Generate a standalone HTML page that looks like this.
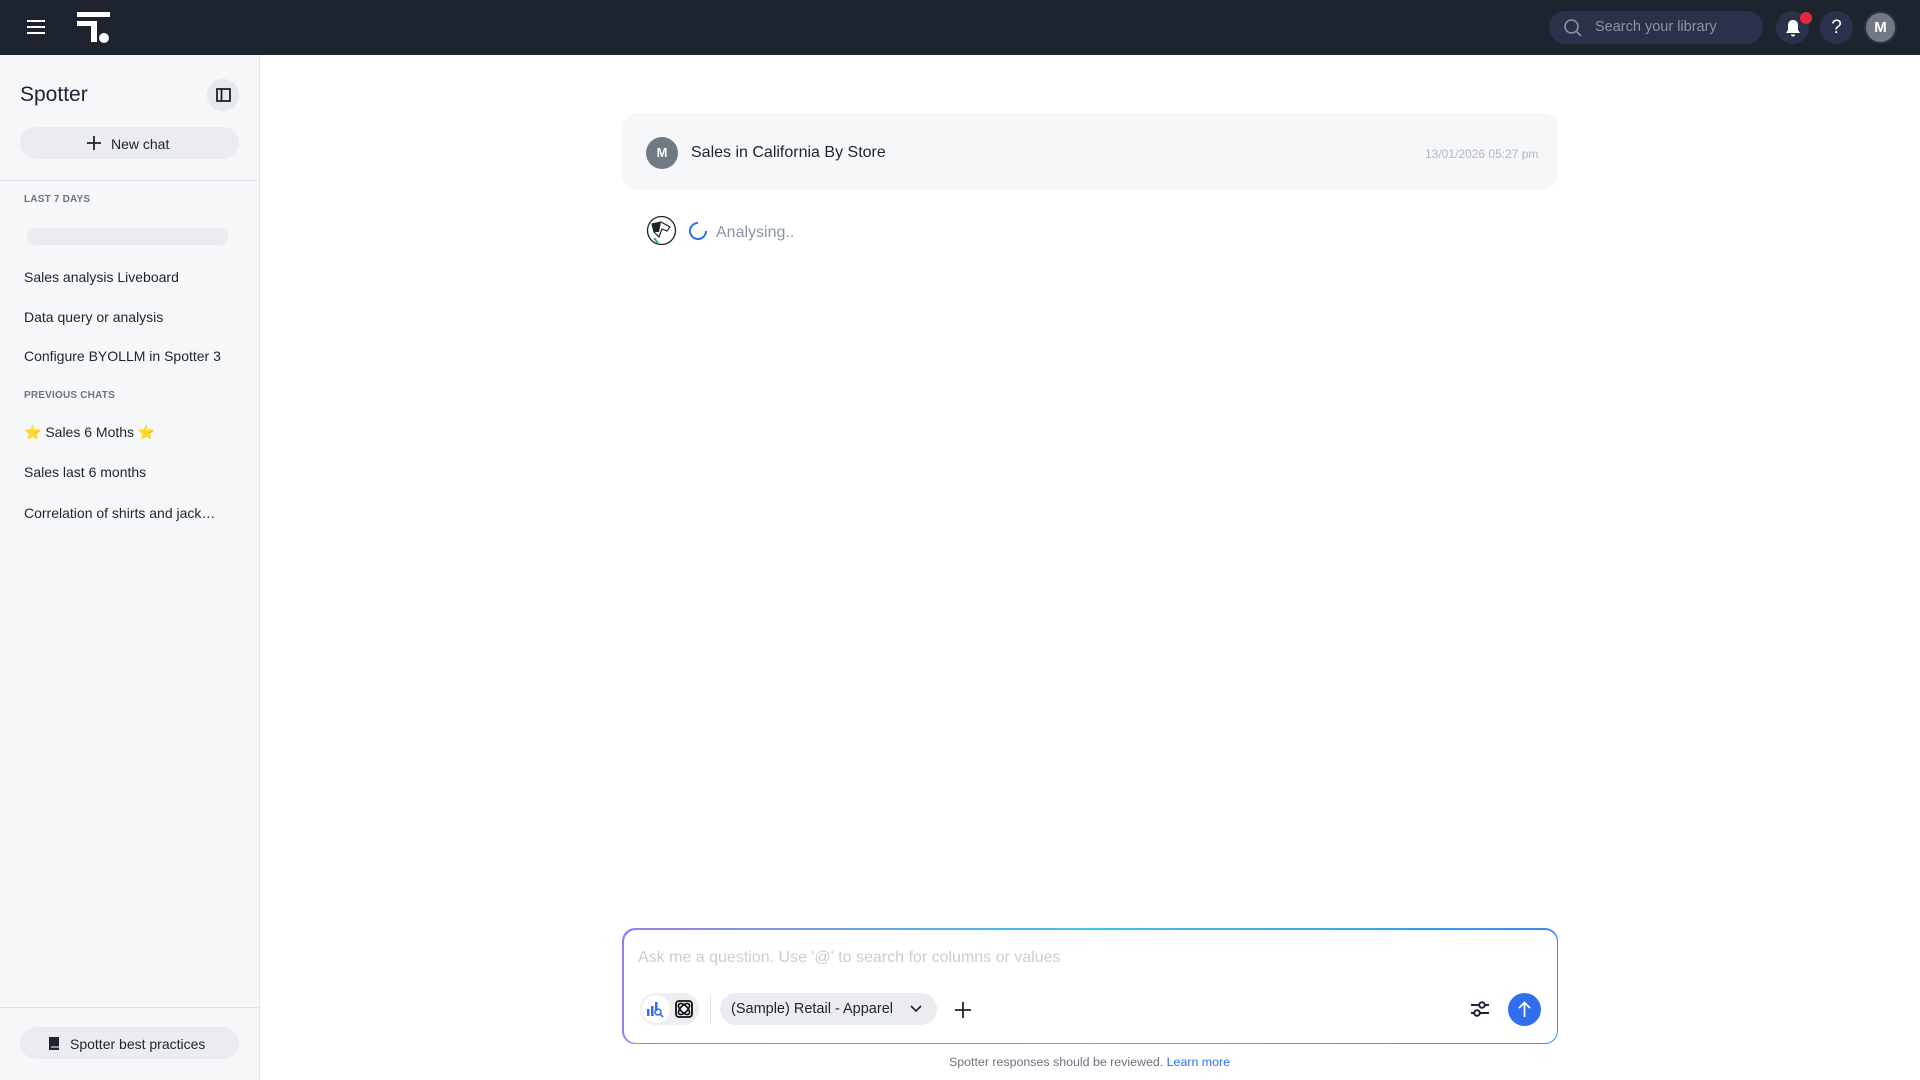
<!DOCTYPE html>
<html><head><meta charset="utf-8"><style>
*{box-sizing:border-box;margin:0;padding:0}
body{width:1920px;height:1080px;overflow:hidden;font-family:"Liberation Sans",sans-serif;background:#fff;position:relative;color:#1d232f}
.nav{position:absolute;left:0;top:0;width:1920px;height:55px;background:#1e2330}
.abs{position:absolute}
.side{position:absolute;left:0;top:55px;width:260px;height:1025px;background:#f6f7f9;border-right:1px solid #e3e6ea}
.item{position:absolute;left:24px;font-size:14px;color:#1d232f}
.hdr{position:absolute;left:24px;font-size:10px;font-weight:bold;color:#6b7280;letter-spacing:.2px}
.pill{position:absolute;background:#eaecef;border-radius:16px}
</style></head><body>
<div class="nav">
 <svg class="abs" style="left:26px;top:19px" width="20" height="16"><g stroke="#fff" stroke-width="2"><line x1="1" y1="2" x2="19" y2="2"/><line x1="1" y1="8" x2="19" y2="8"/><line x1="1" y1="14" x2="19" y2="14"/></g></svg>
 <svg class="abs" style="left:77px;top:12px" width="34" height="32"><rect x="0" y="0" width="33" height="5" fill="#fff"/><path d="M0 9 H20 V30 H14 V14 H0Z" fill="#fff"/><circle cx="27" cy="26" r="5" fill="#fff"/></svg>
 <div class="abs" style="left:1549px;top:11px;width:214px;height:33px;border-radius:17px;background:#29324a"></div>
 <svg class="abs" style="left:1563px;top:18px" width="20" height="20"><circle cx="8.5" cy="8.5" r="6.5" stroke="#8c93a3" stroke-width="1.6" fill="none"/><line x1="13" y1="13" x2="18" y2="18" stroke="#8c93a3" stroke-width="1.6"/></svg>
 <div class="abs" style="left:1595px;top:19px;font-size:14.5px;color:#8c93a3">Search your library</div>
 <div class="abs" style="left:1776px;top:11px;width:33px;height:33px;border-radius:50%;background:#29324a"></div>
 <svg class="abs" style="left:1783px;top:18px" width="20" height="20"><path d="M10 2 C6 2 5 5 5 8 V12 L3 15 H17 L15 12 V8 C15 5 14 2 10 2Z M8 16.5 H12 A2 2 0 0 1 8 16.5Z" fill="#fff"/></svg>
 <div class="abs" style="left:1800px;top:12px;width:12px;height:12px;border-radius:50%;background:#e5283b"></div>
 <div class="abs" style="left:1820px;top:11px;width:33px;height:33px;border-radius:50%;background:#29324a;color:#fff;font-size:19px;text-align:center;line-height:33px">?</div>
 <div class="abs" style="left:1864px;top:11px;width:33px;height:33px;border-radius:50%;background:#727986;border:2px solid #29324a;color:#fff;font-size:15px;font-weight:bold;text-align:center;line-height:29px">M</div>
</div>
<div class="side">
 <div class="abs" style="left:20px;top:28px;font-size:21px">Spotter</div>
 <div class="abs" style="left:207px;top:24px;width:32px;height:32px;border-radius:50%;background:#e6e8ec"></div>
 <svg class="abs" style="left:216px;top:33px" width="15" height="14"><rect x="1" y="1" width="13" height="12" fill="none" stroke="#1d232f" stroke-width="1.8"/><line x1="5.5" y1="1" x2="5.5" y2="13" stroke="#1d232f" stroke-width="1.8"/></svg>
 <div class="pill" style="left:20px;top:72px;width:219px;height:32px"></div>
 <svg class="abs" style="left:87px;top:81px" width="14" height="14"><path d="M7 0 V14 M0 7 H14" stroke="#1d232f" stroke-width="1.8"/></svg>
 <div class="abs" style="left:111px;top:81px;font-size:14px">New chat</div>
 <div class="abs" style="left:0;top:125px;width:260px;height:1px;background:#dde1e6"></div>
 <div class="hdr" style="top:139px">LAST 7 DAYS</div>
 <div class="pill" style="left:27px;top:173px;width:201px;height:17px;border-radius:9px"></div>
 <div class="item" style="top:214px">Sales analysis Liveboard</div>
 <div class="item" style="top:254px">Data query or analysis</div>
 <div class="item" style="top:293px">Configure BYOLLM in Spotter 3</div>
 <div class="hdr" style="top:335px">PREVIOUS CHATS</div>
 <div class="item" style="top:369px">⭐ Sales 6 Moths ⭐</div>
 <div class="item" style="top:409px">Sales last 6 months</div>
 <div class="item" style="top:450px">Correlation of shirts and jack…</div>
 <div class="abs" style="left:0;top:952px;width:260px;height:1px;background:#dde1e6"></div>
 <div class="pill" style="left:20px;top:972px;width:219px;height:32px"></div>
 <svg class="abs" style="left:48px;top:981px" width="12" height="15"><path d="M1 1 H11 V14 H1Z" fill="#1d232f"/><line x1="3" y1="11" x2="11" y2="11" stroke="#fff" stroke-width="1"/></svg>
 <div class="abs" style="left:70px;top:981px;font-size:14px">Spotter best practices</div>
</div>
<div class="abs" style="left:622px;top:113px;width:936px;height:77px;border-radius:16px;background:#f6f7f9"></div>
<div class="abs" style="left:646px;top:137px;width:32px;height:32px;border-radius:50%;background:#727986;color:#fff;font-size:13px;font-weight:bold;text-align:center;line-height:32px">M</div>
<div class="abs" style="left:691px;top:144px;font-size:16px">Sales in California By Store</div>
<div class="abs" style="left:1425px;top:147px;font-size:12px;color:#b0b6c1">13/01/2026 05:27 pm</div>
<svg class="abs" style="left:646px;top:215px" width="31" height="31"><circle cx="15.5" cy="15.5" r="14" fill="#fff" stroke="#1d232f" stroke-width="1.3"/><path d="M6 9 L15 7 L24 12 L21 16 L16 14 L13 22 L8 17Z" fill="#fff" stroke="#1d232f" stroke-width="1.2"/><path d="M6 9 L15 7 L13 17 L8 17Z" fill="#1d232f"/><line x1="8" y1="23" x2="12" y2="28" stroke="#2bb36b" stroke-width="2"/></svg>
<svg class="abs" style="left:688px;top:221px" width="20" height="20"><path d="M10 2 A8 8 0 1 0 18 10" fill="none" stroke="#2f6fed" stroke-width="2"/></svg>
<div class="abs" style="left:716px;top:224px;font-size:16px;color:#8a94a6">Analysing..</div>
<div class="abs" style="left:622px;top:928px;width:936px;height:116px;border-radius:13px;background:linear-gradient(90deg,#9b7cf0,#3dc7e0 50%,#3b8cf0);padding:1.5px"><div style="width:100%;height:100%;background:#fff;border-radius:12px"></div></div>
<div class="abs" style="left:638px;top:949px;font-size:16px;color:#c9cdd4">Ask me a question. Use '@' to search for columns or values</div>
<div class="abs" style="left:640px;top:993px;width:59px;height:32px;border-radius:16px;background:#eceef1"></div>
<div class="abs" style="left:642px;top:995px;width:28px;height:28px;border-radius:50%;background:#fff"></div>
<svg class="abs" style="left:646px;top:1000px" width="18" height="18"><g fill="#2f6fed"><rect x="1" y="9" width="2.5" height="7"/><rect x="5" y="6" width="2.5" height="10"/><rect x="9" y="2" width="2.5" height="9"/></g><circle cx="12" cy="12" r="3" fill="none" stroke="#2f6fed" stroke-width="1.6"/><line x1="14" y1="14" x2="17" y2="17" stroke="#2f6fed" stroke-width="1.6"/></svg>
<svg class="abs" style="left:675px;top:1000px" width="18" height="18"><rect x="1" y="1" width="16" height="16" rx="3" fill="none" stroke="#111" stroke-width="1.8"/><ellipse cx="9" cy="9" rx="7" ry="3.5" transform="rotate(45 9 9)" fill="none" stroke="#111" stroke-width="1.6"/><ellipse cx="9" cy="9" rx="7" ry="3.5" transform="rotate(-45 9 9)" fill="none" stroke="#111" stroke-width="1.6"/></svg>
<div class="abs" style="left:710px;top:994px;width:1px;height:30px;background:#e3e6ea"></div>
<div class="abs" style="left:720px;top:993px;width:217px;height:32px;border-radius:16px;background:#eaecef"></div>
<div class="abs" style="left:731px;top:1001px;font-size:14.5px">(Sample) Retail - Apparel</div>
<svg class="abs" style="left:910px;top:1004px" width="12" height="10"><path d="M1 2 L6 7 L11 2" fill="none" stroke="#1d232f" stroke-width="1.6"/></svg>
<svg class="abs" style="left:955px;top:1002px" width="16" height="16"><path d="M8 0 V16 M0 8 H16" stroke="#1d232f" stroke-width="1.8"/></svg>
<svg class="abs" style="left:1470px;top:999px" width="20" height="20"><g stroke="#1d232f" stroke-width="2"><line x1="1" y1="6" x2="19" y2="6"/><line x1="1" y1="14" x2="19" y2="14"/></g><circle cx="12" cy="6" r="2.8" fill="#fff" stroke="#1d232f" stroke-width="2"/><circle cx="7" cy="14" r="2.8" fill="#fff" stroke="#1d232f" stroke-width="2"/></svg>
<div class="abs" style="left:1508px;top:993px;width:33px;height:33px;border-radius:50%;background:#2f6fed"></div>
<svg class="abs" style="left:1516px;top:1000px" width="17" height="19"><path d="M8.5 17 V3 M3 8 L8.5 2.5 L14 8" fill="none" stroke="#fff" stroke-width="1.8"/></svg>
<div class="abs" style="left:949px;top:1055px;font-size:12.4px;color:#6b7280">Spotter responses should be reviewed. <span style="color:#2f6fed">Learn more</span></div>
</body></html>
